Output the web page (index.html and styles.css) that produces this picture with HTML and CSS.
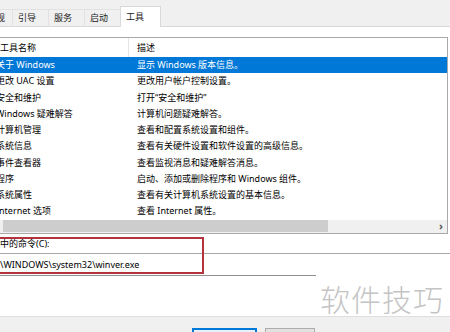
FILE: index.html
```html
<!DOCTYPE html>
<html lang="zh-CN">
<head>
  <meta charset="UTF-8" />
  <title>系统配置 - 工具</title>
  <link rel="stylesheet" href="styles.css">
</head>
<body>
  <div class="dialog">
    <div class="tabs">
      <div class="tab tab-cut">常规</div>
      <div class="tab">引导</div>
      <div class="tab">服务</div>
      <div class="tab">启动</div>
      <div class="tab active">工具</div>
    </div>

    <div class="page">
      <div class="list">
        <div class="list-head">
          <div class="col-name">工具名称</div>
          <div class="col-desc">描述</div>
        </div>
        <div class="rows">
          <div class="row selected"><div class="name">关于 Windows</div><div class="desc">显示 Windows 版本信息。</div></div>
          <div class="row"><div class="name">更改 UAC 设置</div><div class="desc">更改用户帐户控制设置。</div></div>
          <div class="row"><div class="name">安全和维护</div><div class="desc">打开“安全和维护”</div></div>
          <div class="row"><div class="name">Windows 疑难解答</div><div class="desc">计算机问题疑难解答。</div></div>
          <div class="row"><div class="name">计算机管理</div><div class="desc">查看和配置系统设置和组件。</div></div>
          <div class="row"><div class="name">系统信息</div><div class="desc">查看有关硬件设置和软件设置的高级信息。</div></div>
          <div class="row"><div class="name">事件查看器</div><div class="desc">查看监视消息和疑难解答消息。</div></div>
          <div class="row"><div class="name">程序</div><div class="desc">启动、添加或删除程序和 Windows 组件。</div></div>
          <div class="row"><div class="name">系统属性</div><div class="desc">查看有关计算机系统设置的基本信息。</div></div>
          <div class="row"><div class="name">Internet 选项</div><div class="desc">查看 Internet 属性。</div></div>
        </div>
        <div class="hscroll">
          <div class="thumb"></div>
          <span class="arrow">›</span>
        </div>
      </div>

      <div class="cmd">
        <div class="cmd-label">选中的命令(C):</div>
        <div class="cmd-box">C:\WINDOWS\system32\winver.exe</div>
        <div class="highlight"></div>
      </div>
    </div>

    <div class="footer">
      <div class="btn primary"></div>
      <div class="btn"></div>
    </div>

    <div class="watermark">软件技巧</div>
  </div>
</body>
</html>
```

FILE: styles.css
```css
* {
  margin: 0;
  padding: 0;
  box-sizing: border-box;
}
body {
  background: #fff;
  color: #000;
  font-family: "Noto Sans", "Noto Sans CJK SC", sans-serif;
  font-size: 9px;
}
.dialog {
  position: relative;
  width: 450px;
  height: 332px;
  overflow: hidden;
}
.tabs {
  height: 27px;
  display: flex;
  align-items: flex-end;
  background: #f0f0f0;
  border-bottom: 1px solid #d9d9d9;
}
.tab {
  width: 37px;
  height: 18px;
  line-height: 16px;
  padding-left: 5px;
  border: 1px solid #e2e2e2;
  border-bottom: none;
  margin-right: -1px;
  margin-bottom: -1px;
  color: #222;
}
.tab-cut {
  margin-left: -24px;
  padding-left: 10px;
}
.tab.active {
  width: 41px;
  height: 21px;
  line-height: 19px;
  background: #fff;
  border-color: #d9d9d9;
  position: relative;
  z-index: 1;
}
.page {
  height: 289px;
  padding-top: 10px;
  background: #fff;
}
.list {
  margin-left: -2px;
  width: 450px;
  border: 1px solid #a9a9a9;
  border-left-color: #828790;
}
.list-head {
  display: grid;
  grid-template-columns: 130px 1fr;
  height: 19px;
  line-height: 19px;
}
.col-name {
  padding-left: 1px;
  border-right: 1px solid #e5e5e5;
}
.col-desc {
  padding-left: 8px;
}
.row {
  display: grid;
  grid-template-columns: 130px 1fr;
  height: 16.25px;
  line-height: 16.25px;
  white-space: nowrap;
}
.row .name {
  margin-left: -3px;
}
.row .desc {
  padding-left: 8px;
}
.row.selected {
  background: #0078d7;
  color: #fff;
}
.hscroll {
  height: 13px;
  background: #f0f0f0;
  display: flex;
  align-items: center;
}
.thumb {
  margin-left: 4px;
  width: 325px;
  height: 12px;
  background: #cdcdcd;
}
.arrow {
  margin-left: auto;
  margin-right: 4px;
  font-size: 11px;
  line-height: 12px;
  color: #555;
  font-weight: bold;
}
.cmd {
  position: relative;
}
.cmd-label {
  height: 19px;
  line-height: 19px;
  margin-left: -9px;
}
.cmd-box {
  width: 316px;
  height: 23px;
  line-height: 21px;
  border-top: 1px solid #a8a8a8;
  border-bottom: 1px solid #8f8f8f;
  text-indent: -8px;
}
.cmd::after {
  content: "";
  position: absolute;
  left: 316px;
  top: 19px;
  width: 140px;
  border-top: 1px solid #a8a8a8;
}
.highlight {
  position: absolute;
  left: -3px;
  top: 3px;
  width: 207px;
  height: 37px;
  border: 2px solid #b3333d;
}
.footer {
  height: 16px;
  background: #f0f0f0;
  border-top: 1px solid #dfdfdf;
  display: flex;
  padding-top: 11px;
  padding-left: 192px;
  gap: 8px;
}
.btn {
  width: 50px;
  height: 23px;
  background: #e1e1e1;
  border: 1px solid #adadad;
}
.btn.primary {
  width: 65px;
  background: #e5f1fb;
  border: 2px solid #0078d7;
}
.watermark {
  position: absolute;
  left: 320px;
  top: 280px;
  font-family: "Noto Sans CJK SC", sans-serif;
  font-size: 30px;
  font-weight: 300;
  line-height: 36px;
  letter-spacing: 1px;
  color: #c4c4c4;
}
```
